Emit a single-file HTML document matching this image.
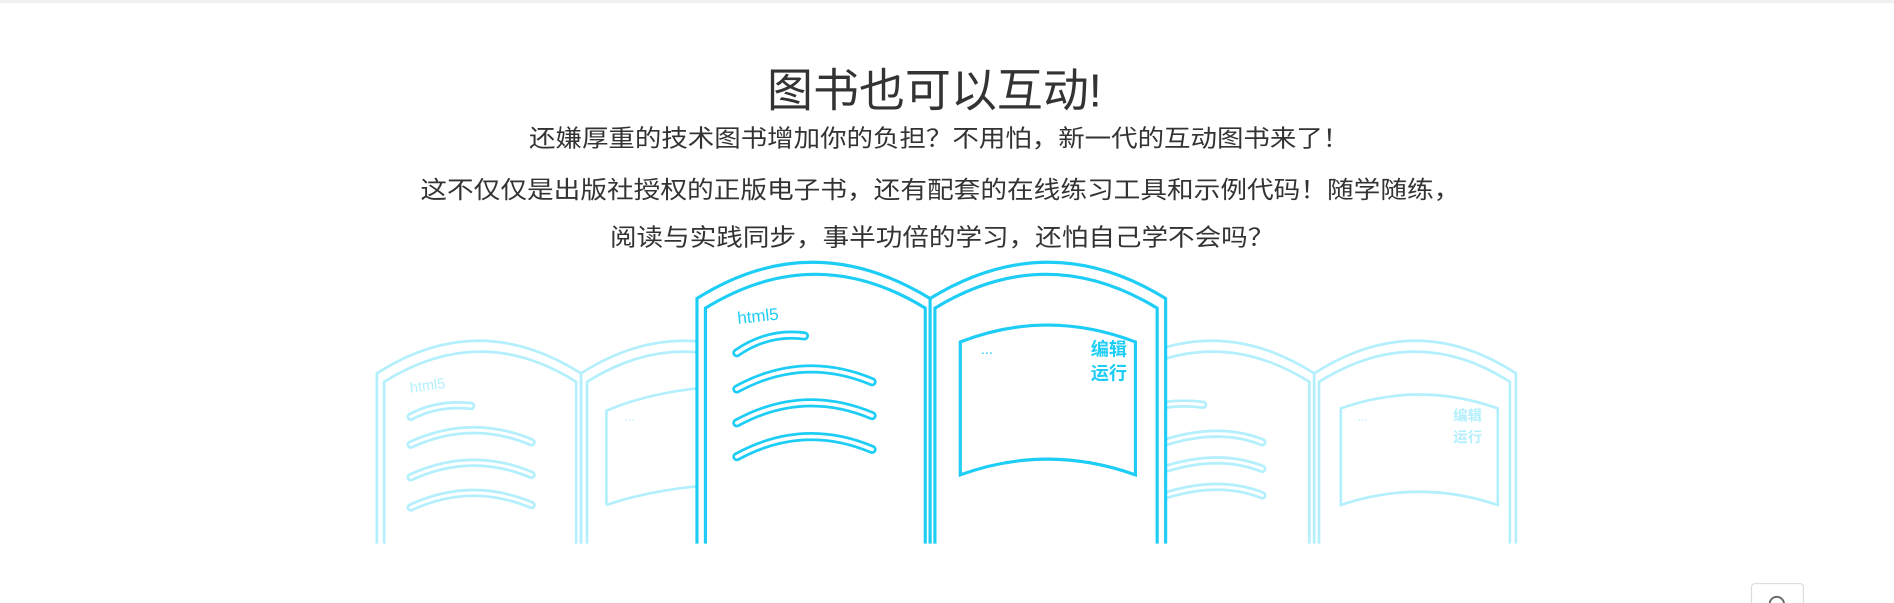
<!DOCTYPE html>
<html><head><meta charset="utf-8"><style>
html,body{margin:0;padding:0;background:#fff;width:1894px;height:603px;overflow:hidden}
svg{display:block}
</style></head><body>
<svg width="1894" height="603" viewBox="0 0 1568 499" xmlns="http://www.w3.org/2000/svg">
<rect x="0" y="0" width="1568" height="2.5" fill="#f0f0f0"/>
<g font-family="Liberation Sans, 'Noto Sans CJK SC', sans-serif" fill="#333" text-anchor="start">
<text x="635" y="88" font-size="38" textLength="277" lengthAdjust="spacingAndGlyphs">图书也可以互动!</text>
<text x="438" y="121" font-size="20" textLength="679" lengthAdjust="spacingAndGlyphs">还嫌厚重的技术图书增加你的负担？不用怕，新一代的互动图书来了！</text>
<text x="348" y="164" font-size="20" textLength="861" lengthAdjust="spacingAndGlyphs">这不仅仅是出版社授权的正版电子书，还有配套的在线练习工具和示例代码！随学随练，</text>
<text x="505" y="203" font-size="20" textLength="550" lengthAdjust="spacingAndGlyphs">阅读与实践同步，事半功倍的学习，还怕自己学不会吗？</text>
</g>

<!-- faded books -->
<g stroke="#b3effc" stroke-width="2.2" fill="#fff">
<path d="M312,450 L312,309 Q396,255 481,309 L481,450 Z" stroke="none"/>
<path d="M312,450 L312,309 Q396,255 481,309 L481,450" fill="none"/>
<path d="M318,450 L318,316 Q398,266 477,316 L477,450" fill="none"/>
<path d="M481,450 L481,309 Q566,255 650,309 L650,450" fill="none"/>
<path d="M486,450 L486,316 Q566,266 645,316 L645,450" fill="none"/>
<path d="M502,418 L502,340 Q560,315 650,320 M650,400 Q560,398 502,418" fill="none"/>
<path d="M918,450 L918,309 Q1003,255 1088,309 L1088,450" fill="none"/>
<path d="M923,450 L923,316 Q1004,266 1084,316 L1084,450" fill="none"/>
<path d="M1088,450 L1088,309 Q1172,255 1255,309 L1255,450" fill="none"/>
<path d="M1092,450 L1092,316 Q1172,266 1250,316 L1250,450" fill="none"/>
<path d="M1110,418 L1110,338 Q1175,315 1240,338 L1240,418 Q1175,396 1110,418 Z" fill="none"/>
</g>
<g fill="none" stroke-linecap="round">
<g stroke="#b3effc" stroke-width="7">
<path d="M340,345 Q362,333 390,336"/>
<path d="M340,368 Q390,345 440,366"/>
<path d="M340,395 Q390,372 440,393"/>
<path d="M340,420 Q390,397 440,418"/>
<path d="M965,335 Q980,333 996,335"/>
<path d="M965,366 Q1010,352 1045,366"/>
<path d="M965,388 Q1010,374 1045,388"/>
<path d="M965,410 Q1010,396 1045,410"/>
</g>
<g stroke="#fff" stroke-width="2.5">
<path d="M340,345 Q362,333 390,336"/>
<path d="M340,368 Q390,345 440,366"/>
<path d="M340,395 Q390,372 440,393"/>
<path d="M340,420 Q390,397 440,418"/>
<path d="M965,335 Q980,333 996,335"/>
<path d="M965,366 Q1010,352 1045,366"/>
<path d="M965,388 Q1010,374 1045,388"/>
<path d="M965,410 Q1010,396 1045,410"/>
</g>
</g>
<g fill="#b3effc" font-family="Liberation Sans, 'Noto Sans CJK SC', sans-serif">
<text x="340" y="325" font-size="12" transform="rotate(-8 340 325)">html5</text>
<text x="517" y="348" font-size="10">...</text>
<text x="1124" y="348" font-size="10">...</text>
<text x="1203" y="348" font-size="12" font-weight="bold">编辑</text>
<text x="1203" y="366" font-size="12" font-weight="bold">运行</text>
</g>

<!-- central book -->
<path d="M577,450 L577,247 Q672,187 770,247 Q868,187 965,247 L965,450 Z" fill="#fff"/>
<g stroke="#1dcdf6" stroke-width="2.6" fill="none">
<path d="M577,450 L577,247 Q672,187 770,247 L770,450"/>
<path d="M584,450 L584,255 Q675,199 766,255 L766,450"/>
<path d="M770,247 Q868,187 965,247 L965,450"/>
<path d="M774,450 L774,255 Q866,199 958,255 L958,450"/>
<path d="M795,393 L795,283 Q867,255 940,283 L940,393 Q867,367 795,393 Z"/>
</g>
<g fill="none" stroke-linecap="round">
<g stroke="#1dcdf6" stroke-width="7.5">
<path d="M610,292 Q636,274 666,278"/>
<path d="M610,322 Q665,292 722,316"/>
<path d="M610,350 Q665,320 722,344"/>
<path d="M610,378 Q665,348 722,372"/>
</g>
<g stroke="#fff" stroke-width="3">
<path d="M610,292 Q636,274 666,278"/>
<path d="M610,322 Q665,292 722,316"/>
<path d="M610,350 Q665,320 722,344"/>
<path d="M610,378 Q665,348 722,372"/>
</g>
</g>
<g fill="#1dcdf6" font-family="Liberation Sans, 'Noto Sans CJK SC', sans-serif">
<text x="611" y="268" font-size="14" transform="rotate(-6 611 268)">html5</text>
<text x="812" y="293" font-size="12">...</text>
<text x="903" y="294" font-size="15" font-weight="bold">编辑</text>
<text x="903" y="314" font-size="15" font-weight="bold">运行</text>
</g>

<!-- bottom right button -->
<rect x="1450" y="483" width="43" height="30" rx="3" fill="#fff" stroke="#ddd" stroke-width="1"/>
<circle cx="1471" cy="500" r="6" fill="none" stroke="#666" stroke-width="1.5"/>
</svg>
</body></html>
